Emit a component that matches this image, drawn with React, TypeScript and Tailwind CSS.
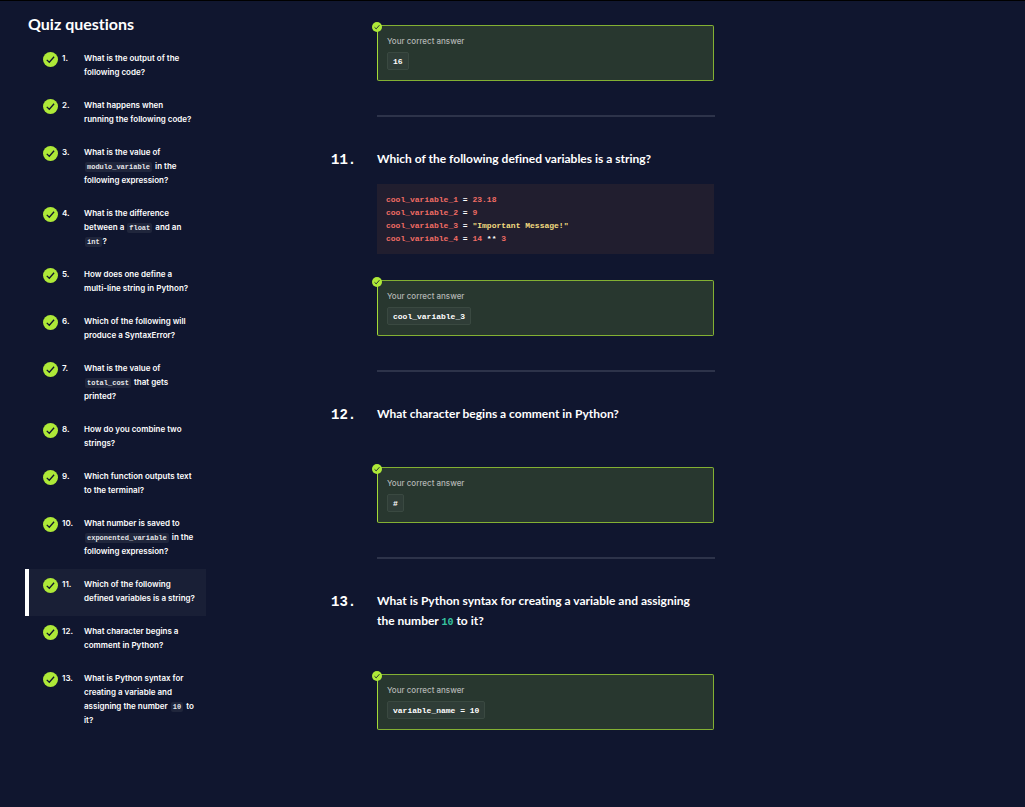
import React from "react";

function CheckBadge({ className }: { className: string }) {
  return (
    <svg viewBox="0 0 30 30" className={className} aria-hidden="true">
      <circle cx="15" cy="15" r="15" fill="#aee938" />
      <path d="M7.5 15.8 L12.6 20.6 L22.2 9.6" fill="none" stroke="#10162f" strokeWidth="2.6" />
    </svg>
  );
}

function SideCode({ children }: { children: React.ReactNode }) {
  return (
    <code className="mx-px rounded-xs bg-[#20263c] px-[2px] py-px font-['Liberation_Mono',monospace] text-[7px] leading-none font-bold text-[#e4e5e9]">
      {children}
    </code>
  );
}

const items: React.ReactNode[] = [
  <>What is the output of the<br />following code?</>,
  <>What happens when<br />running the following code?</>,
  <>What is the value of<br /><SideCode>modulo_variable</SideCode> in the<br />following expression?</>,
  <>What is the difference<br />between a <SideCode>float</SideCode> and an<br /><SideCode>int</SideCode>?</>,
  <>How does one define a<br />multi-line string in Python?</>,
  <>Which of the following will<br />produce a SyntaxError?</>,
  <>What is the value of<br /><SideCode>total_cost</SideCode> that gets<br />printed?</>,
  <>How do you combine two<br />strings?</>,
  <>Which function outputs text<br />to the terminal?</>,
  <>What number is saved to<br /><SideCode>exponented_variable</SideCode> in the<br />following expression?</>,
  <>Which of the following<br />defined variables is a string?</>,
  <>What character begins a<br />comment in Python?</>,
  <>What is Python syntax for<br />creating a variable and<br />assigning the number <SideCode>10</SideCode> to<br />it?</>,
];

const activeItem = 11;

function Sidebar() {
  return (
    <nav className="w-[206px] shrink-0 pt-[13px] pl-[25px]" aria-label="Quiz questions">
      <h1 className="mb-[9px] pl-[3px] text-base leading-5 font-bold">Quiz questions</h1>
      <ol className="font-['Inter',sans-serif] text-[8px] leading-[14px] font-semibold whitespace-nowrap">
        {items.map((text, i) => {
          const n = i + 1;
          return (
            <li key={n}>
              <a
                href={`#question-${n}`}
                className={
                  n === activeItem
                    ? "flex border-l-4 border-white bg-[#191f36] pt-2 pb-[11px] pl-[14px]"
                    : "flex border-l-4 border-transparent pt-2 pb-[11px] pl-[14px]"
                }
              >
                <CheckBadge className="mt-px mr-1 size-[15px] shrink-0" />
                <span className="w-[22px] shrink-0">{n}.</span>
                <span>{text}</span>
              </a>
            </li>
          );
        })}
      </ol>
    </nav>
  );
}

function AnswerCard({ answer }: { answer: string }) {
  return (
    <div className="relative mr-px h-14 rounded-xs border border-[#83b033] border-l-[#a3da37] bg-[#28372f] px-[9px] pt-2">
      <CheckBadge className="absolute -top-1 -left-[6px] size-[10px]" />
      <p className="font-['Inter',sans-serif] text-[8px] leading-[14px] font-medium text-[#b3b6b4]">Your correct answer</p>
      <code className="mt-1 flex h-[18px] w-fit items-center rounded-xs border border-[#3a4941] bg-[#2f3d37] px-[5px] pt-px font-['Liberation_Mono',monospace] text-[8px] font-bold">
        {answer}
      </code>
    </div>
  );
}

function Question({ n, title, children }: { n: number; title: React.ReactNode; children: React.ReactNode }) {
  return (
    <section id={`question-${n}`} className="grid grid-cols-[46px_1fr]">
      <hr className="col-start-2 mt-[34px] mb-8 border-t-2 border-[#2d334a]" />
      <span className="col-start-1 font-['Liberation_Mono',monospace] text-[14px] leading-[22px] font-bold">{n}.</span>
      <div>
        <h2 className="text-[12px] leading-5 font-bold whitespace-nowrap">{title}</h2>
        {children}
      </div>
    </section>
  );
}

function Var({ children }: { children: React.ReactNode }) {
  return <span className="text-[#f06c64]">{children}</span>;
}

function CodeBlock() {
  return (
    <pre className="mt-[15px] mr-px mb-[26px] bg-[#211e2f] px-[9px] py-[9px] font-['Liberation_Mono',monospace] text-[8px] leading-[13px] font-bold">
      <Var>cool_variable_1</Var> = <Var>23.18</Var>{"\n"}
      <Var>cool_variable_2</Var> = <Var>9</Var>{"\n"}
      <Var>cool_variable_3</Var> = <span className="text-[#f2dc80]">"Important Message!"</span>{"\n"}
      <Var>cool_variable_4</Var> = <Var>14</Var> ** <Var>3</Var>
    </pre>
  );
}

export default function App() {
  return (
    <div className="flex min-h-screen border-t border-black bg-[#10162f] font-['Lato',sans-serif] text-white [font-variant-ligatures:none]">
      <Sidebar />
      <main className="ml-[125px] w-full max-w-[384px] pt-6">
        <div className="pl-[46px]">
          <AnswerCard answer="16" />
        </div>
        <Question n={11} title="Which of the following defined variables is a string?">
          <CodeBlock />
          <AnswerCard answer="cool_variable_3" />
        </Question>
        <Question n={12} title="What character begins a comment in Python?">
          <div className="pt-[43px]">
            <AnswerCard answer="#" />
          </div>
        </Question>
        <Question
          n={13}
          title={
            <>
              What is Python syntax for creating a variable and assigning
              <br />
              the number <code className="font-['Liberation_Mono',monospace] text-[10px] leading-none text-[#37c3a0]">10</code> to it?
            </>
          }
        >
          <div className="pt-[43px]">
            <AnswerCard answer="variable_name = 10" />
          </div>
        </Question>
      </main>
    </div>
  );
}
